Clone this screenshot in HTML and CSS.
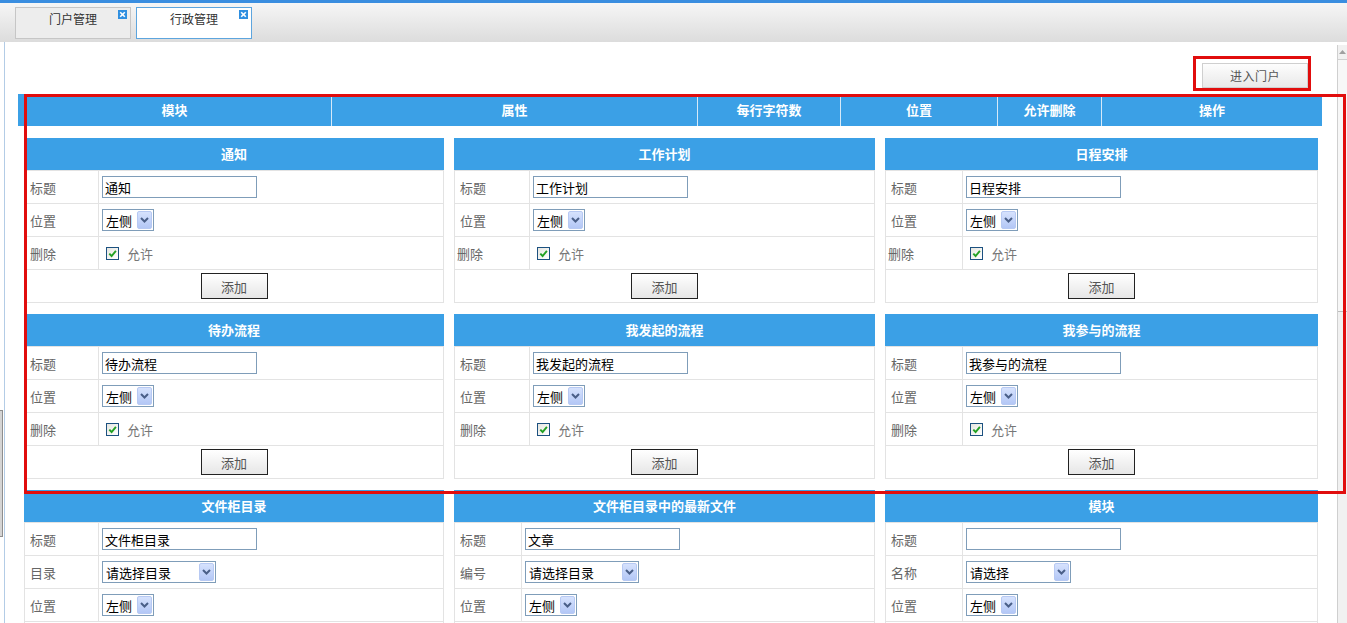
FILE: index.html
```html
<!DOCTYPE html>
<html lang="zh-CN">
<head>
<meta charset="utf-8">
<title>行政管理</title>
<link rel="stylesheet" href="styles.css">
</head>
<body>
<div class="app">
  <div class="topstrip"></div>
  <div class="tabbar">
    <div class="tab">门户管理
      <span class="tab-close"><svg width="9" height="9" viewBox="0 0 9 9"><rect width="9" height="9" fill="#2f8fe0"/><path d="M2.2 2.2 L6.8 6.8 M6.8 2.2 L2.2 6.8" stroke="#fff" stroke-width="1.6"/></svg></span>
    </div>
    <div class="tab tab--active">行政管理
      <span class="tab-close"><svg width="9" height="9" viewBox="0 0 9 9"><rect width="9" height="9" fill="#2f8fe0"/><path d="M2.2 2.2 L6.8 6.8 M6.8 2.2 L2.2 6.8" stroke="#fff" stroke-width="1.6"/></svg></span>
    </div>
  </div>

  <div class="workspace">
    <div class="gutter"><div class="gutter-bar"></div></div>
    <div class="page">
      <div class="toolbar"><button class="enter-btn">进入门户</button></div>

      <div class="colhead">
        <div class="colhead-cell c-module">模块</div>
        <div class="colhead-cell c-attr">属性</div>
        <div class="colhead-cell c-chars">每行字符数</div>
        <div class="colhead-cell c-pos">位置</div>
        <div class="colhead-cell c-del">允许删除</div>
        <div class="colhead-cell c-op">操作</div>
      </div>

      <div class="cards">
        <!-- 第一行 -->
        <div class="card card--a">
          <div class="card-head">通知</div>
          <div class="card-body">
            <div class="row"><div class="lbl">标题</div><div class="val"><input class="txt" type="text" value="通知"></div></div>
            <div class="row"><div class="lbl">位置</div><div class="val"><span class="sel sel--s">左侧<span class="sel-arrow"><svg width="9" height="6" viewBox="0 0 9 6"><path d="M1 1 L4.5 4.5 L8 1" fill="none" stroke="#4a5f88" stroke-width="2"/></svg></span></span></div></div>
            <div class="row"><div class="lbl">删除</div><div class="val"><span class="chk"><svg width="9" height="9" viewBox="0 0 9 9"><path d="M1.3 4.6 L3.6 7 L7.9 1.8" fill="none" stroke="#22a022" stroke-width="1.9"/></svg></span><span class="chk-text">允许</span></div></div>
            <div class="row row--act"><button class="add-btn">添加</button></div>
          </div>
        </div>
        <div class="card card--b">
          <div class="card-head">工作计划</div>
          <div class="card-body">
            <div class="row"><div class="lbl">标题</div><div class="val"><input class="txt" type="text" value="工作计划"></div></div>
            <div class="row"><div class="lbl">位置</div><div class="val"><span class="sel sel--s">左侧<span class="sel-arrow"><svg width="9" height="6" viewBox="0 0 9 6"><path d="M1 1 L4.5 4.5 L8 1" fill="none" stroke="#4a5f88" stroke-width="2"/></svg></span></span></div></div>
            <div class="row"><div class="lbl lbl--tight">删除</div><div class="val"><span class="chk"><svg width="9" height="9" viewBox="0 0 9 9"><path d="M1.3 4.6 L3.6 7 L7.9 1.8" fill="none" stroke="#22a022" stroke-width="1.9"/></svg></span><span class="chk-text">允许</span></div></div>
            <div class="row row--act"><button class="add-btn">添加</button></div>
          </div>
        </div>
        <div class="card card--c">
          <div class="card-head">日程安排</div>
          <div class="card-body">
            <div class="row"><div class="lbl">标题</div><div class="val"><input class="txt" type="text" value="日程安排"></div></div>
            <div class="row"><div class="lbl">位置</div><div class="val"><span class="sel sel--s">左侧<span class="sel-arrow"><svg width="9" height="6" viewBox="0 0 9 6"><path d="M1 1 L4.5 4.5 L8 1" fill="none" stroke="#4a5f88" stroke-width="2"/></svg></span></span></div></div>
            <div class="row"><div class="lbl lbl--tight">删除</div><div class="val"><span class="chk"><svg width="9" height="9" viewBox="0 0 9 9"><path d="M1.3 4.6 L3.6 7 L7.9 1.8" fill="none" stroke="#22a022" stroke-width="1.9"/></svg></span><span class="chk-text">允许</span></div></div>
            <div class="row row--act"><button class="add-btn">添加</button></div>
          </div>
        </div>

        <!-- 第二行 -->
        <div class="card card--a">
          <div class="card-head">待办流程</div>
          <div class="card-body">
            <div class="row"><div class="lbl">标题</div><div class="val"><input class="txt" type="text" value="待办流程"></div></div>
            <div class="row"><div class="lbl">位置</div><div class="val"><span class="sel sel--s">左侧<span class="sel-arrow"><svg width="9" height="6" viewBox="0 0 9 6"><path d="M1 1 L4.5 4.5 L8 1" fill="none" stroke="#4a5f88" stroke-width="2"/></svg></span></span></div></div>
            <div class="row"><div class="lbl">删除</div><div class="val"><span class="chk"><svg width="9" height="9" viewBox="0 0 9 9"><path d="M1.3 4.6 L3.6 7 L7.9 1.8" fill="none" stroke="#22a022" stroke-width="1.9"/></svg></span><span class="chk-text">允许</span></div></div>
            <div class="row row--act"><button class="add-btn">添加</button></div>
          </div>
        </div>
        <div class="card card--b">
          <div class="card-head">我发起的流程</div>
          <div class="card-body">
            <div class="row"><div class="lbl">标题</div><div class="val"><input class="txt" type="text" value="我发起的流程"></div></div>
            <div class="row"><div class="lbl">位置</div><div class="val"><span class="sel sel--s">左侧<span class="sel-arrow"><svg width="9" height="6" viewBox="0 0 9 6"><path d="M1 1 L4.5 4.5 L8 1" fill="none" stroke="#4a5f88" stroke-width="2"/></svg></span></span></div></div>
            <div class="row"><div class="lbl">删除</div><div class="val"><span class="chk"><svg width="9" height="9" viewBox="0 0 9 9"><path d="M1.3 4.6 L3.6 7 L7.9 1.8" fill="none" stroke="#22a022" stroke-width="1.9"/></svg></span><span class="chk-text">允许</span></div></div>
            <div class="row row--act"><button class="add-btn">添加</button></div>
          </div>
        </div>
        <div class="card card--c">
          <div class="card-head">我参与的流程</div>
          <div class="card-body">
            <div class="row"><div class="lbl">标题</div><div class="val"><input class="txt" type="text" value="我参与的流程"></div></div>
            <div class="row"><div class="lbl">位置</div><div class="val"><span class="sel sel--s">左侧<span class="sel-arrow"><svg width="9" height="6" viewBox="0 0 9 6"><path d="M1 1 L4.5 4.5 L8 1" fill="none" stroke="#4a5f88" stroke-width="2"/></svg></span></span></div></div>
            <div class="row"><div class="lbl">删除</div><div class="val"><span class="chk"><svg width="9" height="9" viewBox="0 0 9 9"><path d="M1.3 4.6 L3.6 7 L7.9 1.8" fill="none" stroke="#22a022" stroke-width="1.9"/></svg></span><span class="chk-text">允许</span></div></div>
            <div class="row row--act"><button class="add-btn">添加</button></div>
          </div>
        </div>

        <!-- 第三行 -->
        <div class="card card--a">
          <div class="card-head">文件柜目录</div>
          <div class="card-body">
            <div class="row"><div class="lbl">标题</div><div class="val"><input class="txt" type="text" value="文件柜目录"></div></div>
            <div class="row"><div class="lbl">目录</div><div class="val"><span class="sel sel--l">请选择目录<span class="sel-arrow"><svg width="9" height="6" viewBox="0 0 9 6"><path d="M1 1 L4.5 4.5 L8 1" fill="none" stroke="#4a5f88" stroke-width="2"/></svg></span></span></div></div>
            <div class="row"><div class="lbl">位置</div><div class="val"><span class="sel sel--s">左侧<span class="sel-arrow"><svg width="9" height="6" viewBox="0 0 9 6"><path d="M1 1 L4.5 4.5 L8 1" fill="none" stroke="#4a5f88" stroke-width="2"/></svg></span></span></div></div>
            <div class="row row--act"></div>
          </div>
        </div>
        <div class="card card--b card--narrow">
          <div class="card-head">文件柜目录中的最新文件</div>
          <div class="card-body">
            <div class="row"><div class="lbl">标题</div><div class="val"><input class="txt" type="text" value="文章"></div></div>
            <div class="row"><div class="lbl">编号</div><div class="val"><span class="sel sel--l">请选择目录<span class="sel-arrow"><svg width="9" height="6" viewBox="0 0 9 6"><path d="M1 1 L4.5 4.5 L8 1" fill="none" stroke="#4a5f88" stroke-width="2"/></svg></span></span></div></div>
            <div class="row"><div class="lbl">位置</div><div class="val"><span class="sel sel--s">左侧<span class="sel-arrow"><svg width="9" height="6" viewBox="0 0 9 6"><path d="M1 1 L4.5 4.5 L8 1" fill="none" stroke="#4a5f88" stroke-width="2"/></svg></span></span></div></div>
            <div class="row row--act"></div>
          </div>
        </div>
        <div class="card card--c">
          <div class="card-head">模块</div>
          <div class="card-body">
            <div class="row"><div class="lbl">标题</div><div class="val"><input class="txt" type="text" value=""></div></div>
            <div class="row"><div class="lbl">名称</div><div class="val"><span class="sel sel--m">请选择<span class="sel-arrow"><svg width="9" height="6" viewBox="0 0 9 6"><path d="M1 1 L4.5 4.5 L8 1" fill="none" stroke="#4a5f88" stroke-width="2"/></svg></span></span></div></div>
            <div class="row"><div class="lbl">位置</div><div class="val"><span class="sel sel--s">左侧<span class="sel-arrow"><svg width="9" height="6" viewBox="0 0 9 6"><path d="M1 1 L4.5 4.5 L8 1" fill="none" stroke="#4a5f88" stroke-width="2"/></svg></span></span></div></div>
            <div class="row row--act"></div>
          </div>
        </div>
      </div>
    </div>

    <div class="vscroll">
      <div class="vscroll-up"><svg width="7" height="4" viewBox="0 0 7 4"><path d="M0 4 L3.5 0 L7 4 Z" fill="#a0a0a0"/></svg></div>
      <div class="vscroll-thumb"></div>
    </div>
  </div>

  <!-- 红色标注框 -->
  <div class="mark mark--btn"></div>
  <div class="mark mark--area"></div>
</div>
</body>
</html>
```

FILE: styles.css
```css
* {
  box-sizing: border-box;
}

html, body {
  margin: 0;
  padding: 0;
  background: #fff;
  overflow: hidden;
}

body {
  font-family: "Noto Sans CJK SC", "Liberation Sans", sans-serif;
  font-size: 13px;
  color: #333;
}

.app {
  position: relative;
  width: 1347px;
  height: 623px;
  overflow: hidden;
}

/* ---------- 顶部标签栏 ---------- */
.topstrip {
  height: 3px;
  background: #3a8ee0;
}

.tabbar {
  height: 39px;
  display: flex;
  gap: 5px;
  padding: 4px 0 0 15px;
  background: linear-gradient(#f6f6f6, #dcdcdc);
}

.tab {
  position: relative;
  width: 116px;
  height: 32px;
  border: 1px solid #c6c6c6;
  background: #ededed;
  font-size: 12px;
  line-height: 16px;
  padding-top: 3px;
  text-align: center;
  color: #333;
}

.tab--active {
  background: #fff;
  border-color: #5da5de;
}

.tab-close {
  position: absolute;
  top: 2px;
  right: 3px;
  width: 9px;
  height: 9px;
  line-height: 0;
}

/* ---------- 工作区 ---------- */
.workspace {
  display: flex;
  height: 581px;
}

.gutter {
  width: 4px;
  flex: none;
}

.gutter-bar {
  margin-top: 368px;
  width: 3px;
  height: 127px;
  background: #d4d4d4;
  border: 1px solid #8e8e8e;
  border-left: 0;
}

.page {
  width: 1333px;
  flex: none;
  border-left: 1px solid #b3cce6;
}

.toolbar {
  display: flex;
  justify-content: flex-end;
  padding: 21px 29px 0 0;
}

.enter-btn {
  width: 106px;
  height: 25px;
  margin: 0;
  padding: 0;
  border: 1px solid #cfcfcf;
  background: linear-gradient(#fdfdfd, #e9e9e9);
  font-family: inherit;
  font-size: 12px;
  color: #555;
  letter-spacing: 0.5px;
}

/* ---------- 列标题 ---------- */
.colhead {
  display: flex;
  margin: 6px 0 0 13px;
  width: 1304px;
  height: 32px;
  background: #3ba0e6;
}

.colhead-cell {
  line-height: 32px;
  text-align: center;
  color: #fff;
  font-weight: bold;
  font-size: 13px;
  border-right: 1px solid #d6e9f8;
}

.colhead-cell:last-child {
  border-right: 0;
}

.c-module { width: 314px; }
.c-attr   { width: 366px; }
.c-chars  { width: 143px; }
.c-pos    { width: 157px; }
.c-del    { width: 104px; }
.c-op     { flex: 1; }

/* ---------- 模块卡片 ---------- */
.cards {
  display: grid;
  grid-template-columns: 420px 421px 433px;
  column-gap: 10px;
  row-gap: 11px;
  margin: 12px 0 0 19px;
}

.card-head {
  height: 32px;
  line-height: 32px;
  background: #3ba0e6;
  color: #fff;
  font-weight: bold;
  text-align: center;
}

.card-body {
  border: 1px solid #e3e3e3;
  border-top: 0;
}

.row {
  display: grid;
  grid-template-columns: 74px 1fr;
  height: 33px;
  border-top: 1px solid #e3e3e3;
}

.card--b .row { grid-template-columns: 75px 1fr; }
.card--c .row { grid-template-columns: 77px 1fr; }
.card--narrow .row { grid-template-columns: 67px 1fr; }

.lbl {
  display: flex;
  align-items: center;
  padding-left: 5px;
  border-right: 1px solid #e3e3e3;
  color: #666;
  font-size: 13px;
}

.lbl--tight {
  padding-left: 2px;
}

.val {
  display: flex;
  align-items: center;
  padding-left: 3px;
}

.row--act {
  display: flex;
  align-items: center;
  justify-content: center;
}

/* 文本框 */
.txt {
  width: 155px;
  height: 22px;
  margin: 0;
  padding: 0 2px;
  border: 1px solid #7f9db9;
  font-family: inherit;
  font-size: 13px;
  color: #000;
  background: #fff;
  outline: none;
}

/* 下拉框 */
.sel {
  position: relative;
  display: flex;
  align-items: center;
  height: 22px;
  padding-left: 3px;
  border: 1px solid #7f9db9;
  background: #fff;
  color: #000;
  font-size: 13px;
}

.sel--s { width: 52px; }
.sel--l { width: 114px; }
.sel--m { width: 105px; }

.sel-arrow {
  position: absolute;
  top: 1px;
  right: 1px;
  width: 15px;
  height: 18px;
  display: flex;
  align-items: center;
  justify-content: center;
  border: 1px solid #b7c9f3;
  border-radius: 2px;
  background: linear-gradient(#d6e2fd, #b3c7f6);
}

/* 复选框 */
.chk {
  width: 13px;
  height: 13px;
  margin-left: 4px;
  display: flex;
  align-items: center;
  justify-content: center;
  border: 1px solid #1c5180;
  background: linear-gradient(135deg, #e6e6e0, #fff);
}

.chk-text {
  margin-left: 8px;
  color: #777;
  font-size: 13px;
}

/* 添加按钮 */
.add-btn {
  width: 67px;
  height: 26px;
  margin: 0;
  padding: 0;
  border: 1px solid #222;
  background: linear-gradient(#fff, #e6e6e6);
  font-family: inherit;
  font-size: 13px;
  color: #555;
}

/* ---------- 滚动条 ---------- */
.vscroll {
  width: 10px;
  flex: none;
  margin-top: 3px;
  background: #f1f1f1;
  border-left: 1px solid #cfcfcf;
}

.vscroll-up {
  height: 15px;
  display: flex;
  align-items: center;
  justify-content: center;
  border-bottom: 1px solid #d0d0d0;
}

.vscroll-thumb {
  height: 252px;
  border-bottom: 1px solid #bdbdbd;
  background: #f7f7f7;
}

/* ---------- 红色标注框 ---------- */
.mark {
  position: absolute;
  border: 3px solid #e10d0d;
  pointer-events: none;
}

.mark--btn {
  left: 1193px;
  top: 56px;
  width: 118px;
  height: 35px;
}

.mark--area {
  left: 24px;
  top: 94px;
  width: 1322px;
  height: 400px;
}
```
